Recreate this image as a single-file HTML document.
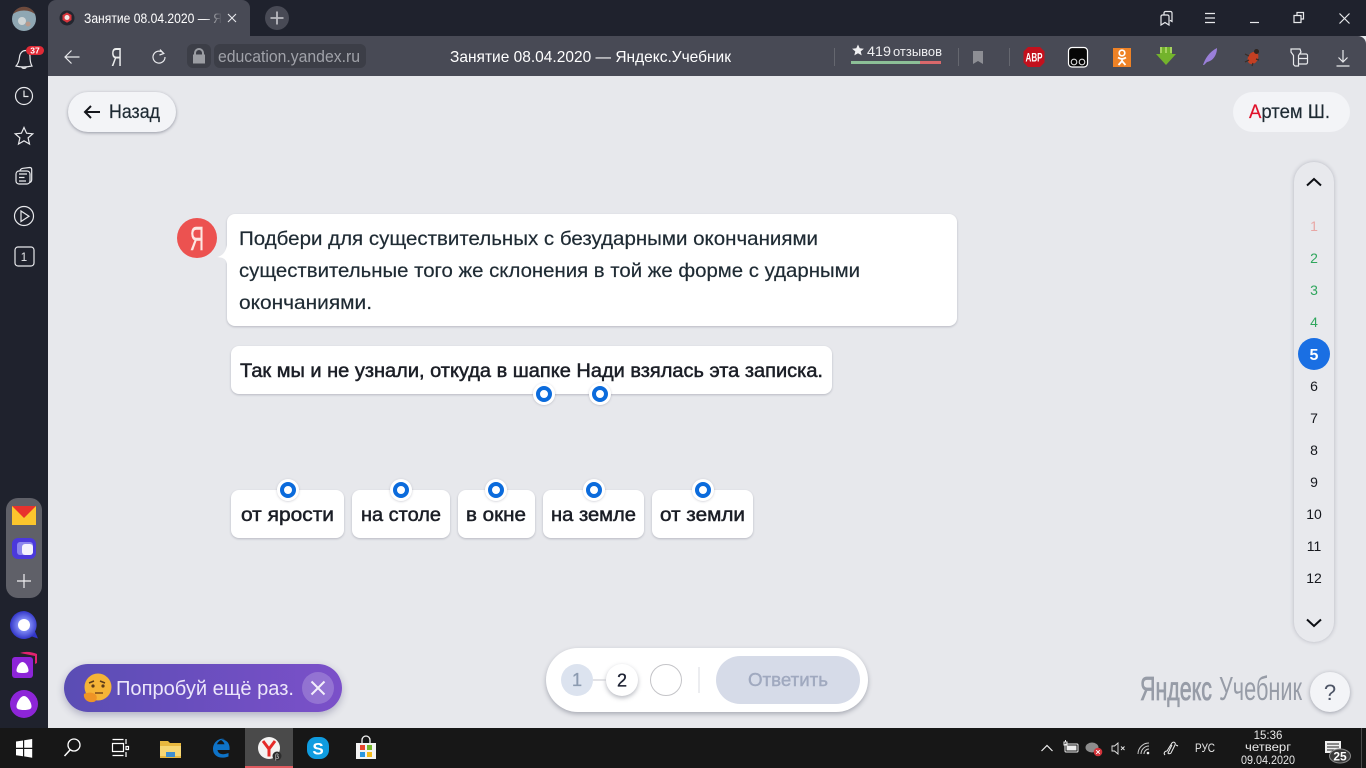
<!DOCTYPE html>
<html lang="ru"><head><meta charset="utf-8"><title>Занятие 08.04.2020 — Яндекс.Учебник</title>
<style>
html,body{margin:0;padding:0;width:1366px;height:768px;overflow:hidden;background:#e7e8ec}
div{position:absolute;box-sizing:border-box}
svg{position:absolute;left:0;top:0}
text{font-family:"Liberation Sans","Noto Sans CJK SC",sans-serif;white-space:pre}
.m{stroke-width:.5px;stroke:#1b1e26;fill:#1b1e26}
.q{stroke-width:.2px;stroke:#1e2a33;fill:#1e2a33}
.ic{fill:none;stroke:#e8e9ec;stroke-width:1.2}
.card{background:#fff;border-radius:8px;box-shadow:0 1px 2px rgba(60,65,85,.28)}
</style></head><body>
<div style="left:48px;top:76px;width:1318px;height:652px;background:#e7e8ec"></div>
<div style="left:0;top:0;width:48px;height:728px;background:#1f222d"></div>
<div style="left:48px;top:0;width:1318px;height:36px;background:#1f222d"></div>
<div style="left:48px;top:36px;width:1318px;height:40px;background:#484a55;border-radius:0 8px 0 0"></div>
<div style="left:48px;top:0;width:202px;height:37px;background:#484a55;border-radius:8px 8px 0 0"></div>
<div style="left:6px;top:498px;width:36px;height:100px;border-radius:12px;background:#5f6068"></div>
<div style="left:187px;top:44px;width:24px;height:24px;border-radius:6px;background:#3c3e47"></div>
<div style="left:214px;top:44px;width:152px;height:24px;border-radius:6px;background:#3c3e47"></div>
<div style="left:68px;top:92px;width:108px;height:40px;border-radius:20px;background:#f3f4f7;box-shadow:0 1px 3px rgba(50,55,75,.45)"></div>
<div style="left:1233px;top:92px;width:117px;height:40px;border-radius:20px;background:#f3f4f7"></div>
<div class="card" style="left:227px;top:214px;width:730px;height:112px"></div>
<div class="card" style="left:231px;top:346px;width:601px;height:48px"></div>
<div class="card" style="left:231px;top:490px;width:113px;height:48px"></div>
<div class="card" style="left:352px;top:490px;width:98px;height:48px"></div>
<div class="card" style="left:458px;top:490px;width:77px;height:48px"></div>
<div class="card" style="left:543px;top:490px;width:101px;height:48px"></div>
<div class="card" style="left:652px;top:490px;width:101px;height:48px"></div>
<div style="left:1294px;top:162px;width:40px;height:480px;border-radius:20px;background:#e8e9ed;box-shadow:0 0 4px rgba(50,55,75,.28)"></div>
<div style="left:546px;top:648px;width:322px;height:64px;border-radius:32px;background:#fff;box-shadow:0 2px 5px rgba(50,55,75,.35)"></div>
<div style="left:716px;top:656px;width:144px;height:48px;border-radius:24px;background:#d6dbe8"></div>
<div style="left:561px;top:664px;width:32px;height:32px;border-radius:50%;background:#dce3ef"></div>
<div style="left:606px;top:664px;width:32px;height:32px;border-radius:50%;background:#fff;box-shadow:0 2px 5px rgba(50,55,75,.35)"></div>
<div style="left:650px;top:664px;width:32px;height:32px;border-radius:50%;background:#fff;border:1px solid #c4c4c8"></div>
<div style="left:64px;top:664px;width:278px;height:48px;border-radius:24px;background:linear-gradient(90deg,#5a4db4,#7b50c9);box-shadow:0 3px 8px rgba(50,45,100,.3)"></div>
<div style="left:1310px;top:672px;width:40px;height:40px;border-radius:50%;background:#f3f4f7;box-shadow:0 1px 4px rgba(50,55,75,.4)"></div>
<div style="left:0;top:728px;width:1366px;height:40px;background:#171717"></div>
<div style="left:245px;top:728px;width:48px;height:40px;background:#4a4a4a;border-bottom:2px solid #e05a5f"></div>

<svg width="1366" height="768" viewBox="0 0 1366 768" xmlns="http://www.w3.org/2000/svg">
<defs>
<linearGradient id="fade" gradientUnits="userSpaceOnUse" x1="205" y1="0" x2="222" y2="0"><stop offset="0" stop-color="#fff"/><stop offset="1" stop-color="#fff" stop-opacity="0"/></linearGradient>
<radialGradient id="blueb"><stop offset=".3" stop-color="#8f9bff"/><stop offset="1" stop-color="#3236c8"/></radialGradient>
<filter id="s" x="-40%" y="-40%" width="180%" height="180%"><feDropShadow dx="0" dy="0.5" stdDeviation="1" flood-color="#505064" flood-opacity=".3"/></filter>
<g id="dot"><circle r="11" fill="#fff" filter="url(#s)"/><circle r="6" fill="none" stroke="#0b6bdc" stroke-width="4"/></g>
</defs>

<!-- tab -->
<circle cx="67" cy="18" r="7.500" fill="#23262f"/>
<path d="M67 12.500l4.500 2.500v5l-4.500 2.800-4.500-2.800v-5z" fill="#d8353c"/>
<circle cx="67" cy="17.500" r="2.500" fill="#f2e6e6"/>
<text x="84" y="23" font-size="13.500" fill="url(#fade)" textLength="138" lengthAdjust="spacingAndGlyphs">Занятие 08.04.2020 — Я</text>
<path d="M228 14l8 8M236 14l-8 8" fill="none" stroke="#e8e9ec" stroke-width="1.100"/>
<circle cx="277" cy="18" r="12" fill="#484a55"/>
<path d="M277 11.500v13M270.500 18h13" stroke="#b9bac0" stroke-width="1.800" fill="none"/>

<!-- window controls -->
<path class="ic" d="M1161 16.500a1.500 1.500 0 0 1 1.500-1.500h5a1.500 1.500 0 0 1 1.500 1.500V25l-4-2.500-4 2.500zM1164 15v-2a1.500 1.500 0 0 1 1.500-1.500h5a1.500 1.500 0 0 1 1.500 1.500v8.500l-2-1.200"/>
<path class="ic" d="M1205 13.500h10M1205 18h10M1205 22.500h10"/>
<path class="ic" d="M1250 22.500h9"/>
<path class="ic" d="M1294 15.500h7v7h-7zM1297 15.500v-3h6.500v6.500h-2.500"/>
<path class="ic" d="M1339.500 13.500l10 10M1349.500 13.500l-10 10"/>

<!-- toolbar -->
<path class="ic" d="M65 57h14.500M71.500 50.500L65 57l6.500 6.500"/>
<text x="111" y="66" font-size="26" fill="#eceded" textLength="11" lengthAdjust="spacingAndGlyphs">Я</text>
<path class="ic" d="M163.800 53.500a6 6 0 1 0 1.200 3.500M160 49.500l3.800 4-4.300 1.500"/>
<path d="M194 54.500v-1.500a5 5 0 0 1 10 0v1.500h1v9h-12v-9zm2 0h6v-1.500a3 3 0 0 0-6 0z" fill="#9b9da3"/>
<text x="218" y="62" font-size="16.500" fill="#a0a2a9" textLength="142" lengthAdjust="spacingAndGlyphs">education.yandex.ru</text>
<text x="450" y="62" font-size="16" fill="#fff" textLength="281" lengthAdjust="spacingAndGlyphs">Занятие 08.04.2020 — Яндекс.Учебник</text>
<path d="M834.500 48v18M958.500 48v18M1009.500 48v18" stroke="#65676f" stroke-width="1"/>
<path d="M858 44.500l1.700 3.800 4.200.4-3.200 2.700 1 4-3.700-2.100-3.700 2.100 1-4-3.200-2.700 4.200-.4z" fill="#f0f0f2"/>
<text x="867" y="56" font-size="14" fill="#eeeef0" textLength="24" lengthAdjust="spacingAndGlyphs">419</text>
<text x="893" y="56" font-size="12.500" fill="#eeeef0" textLength="49" lengthAdjust="spacingAndGlyphs">отзывов</text>
<rect x="851" y="61" width="69" height="3" fill="#8cbf97"/><rect x="920" y="61" width="21" height="3" fill="#d9686b"/>
<path d="M973 51h10v13l-5-3-5 3z" fill="#8d8e94"/>
<path d="M1028 47h12l4.500 4.500v11l-4.500 4.500h-12l-4.500-4.500v-11z" fill="#c3111d"/>
<text x="1034" y="61.500" font-size="11.500" font-weight="700" fill="#fff" text-anchor="middle" textLength="17" lengthAdjust="spacingAndGlyphs">ABP</text>
<rect x="1068.500" y="47.500" width="19" height="19.500" rx="3.500" fill="#060606" stroke="#fff" stroke-width="1.200"/>
<circle cx="1074" cy="62" r="2.800" fill="none" stroke="#ddd" stroke-width="1.100"/><circle cx="1082" cy="62" r="2.800" fill="none" stroke="#ddd" stroke-width="1.100"/>
<rect x="1113" y="48" width="18" height="19" fill="#ee8226"/>
<circle cx="1122" cy="53" r="2.800" fill="none" stroke="#fff" stroke-width="1.700"/>
<path d="M1118 57.500c2.500 1.700 5.500 1.700 8 0M1122 59v2.500M1122 61l-3.500 4M1122 61l3.500 4" stroke="#fff" stroke-width="1.800" fill="none"/>
<path d="M1160 47h12v7h4l-10 11-10-11h4z" fill="#73b32c"/><path d="M1161 47v6M1166 47v6M1171 47v6" stroke="#b8dd72" stroke-width="1.500"/>
<path d="M1203 65c2-6 6-13 14-17 0 7-4 13-10 14l-3 3z" fill="#9a7fd9"/>
<ellipse cx="1253" cy="58" rx="5" ry="6.500" transform="rotate(30 1253 58)" fill="#c43f22"/>
<circle cx="1256.500" cy="51.500" r="2.500" fill="#30251f"/><path d="M1245 54l4 2M1245 62l4-2M1252 66l1-3M1259 60l-3-1" stroke="#3a2c25" stroke-width="1.200"/>
<path class="ic" d="M1291 49h9l1 3-2.500 3.500v10.500h-3.500l-1.500-1.500V55.500L1291 52zM1300 54h6a1.500 1.500 0 0 1 1.500 1.500v7a1.500 1.500 0 0 1-1.500 1.500h-8M1299 58.500h8.500"/>
<path class="ic" d="M1343 50v12M1338.500 57.500L1343 62l4.500-4.500M1336.500 66h13"/>

<!-- sidebar -->
<circle cx="24" cy="19" r="12" fill="#8fa7b3"/><path d="M13 14a12 12 0 0 1 22 0c-3-2-6-3.500-11-3.500S16 12 13 14z" fill="#6e4a3c"/><circle cx="22" cy="21" r="4" fill="#cfd5d6"/><circle cx="28" cy="24" r="2.500" fill="#b99a8c"/>
<path class="ic" d="M16 66c2-2 3-4 3.500-9 .4-4 3-6.500 6-6.500s4.500 2 4.500 6c0 4 .5 7 2 9.500-5 1-11 1.500-16 0zM21.500 67a3 3 0 0 0 5 0"/>
<rect x="26" y="46" width="18" height="9" rx="4.500" fill="#e02a36"/><text x="35" y="53.500" font-size="8.500" font-weight="700" fill="#fff" text-anchor="middle">37</text>
<circle class="ic" cx="24" cy="96" r="8.500"/><path class="ic" d="M24 90.500V96.500h4.500"/>
<path class="ic" d="M24 127.500l2.600 5.700 6.200.6-4.700 4.100 1.400 6.100-5.500-3.200-5.500 3.200 1.400-6.100-4.700-4.100 6.200-.6z"/>
<rect class="ic" x="16" y="171" width="14" height="13" rx="3"/><path class="ic" d="M19 174h8M19 177.500h5.500M19 181h7M20 170.500c.5-1.500 1.500-2 3-2.200l6.500-.8c1.300 0 2.200.8 2.200 2v10c0 1.500-.5 2.500-1.700 3"/>
<circle class="ic" cx="24" cy="216" r="9.500"/><path class="ic" d="M21 211v10.500l8-5.200z"/>
<rect class="ic" x="15" y="247" width="19" height="19" rx="3"/>
<text x="24" y="261" font-size="11.500" fill="#e8e9ec" text-anchor="middle">1</text>
<rect x="12" y="506" width="24" height="19" fill="#fbc62d"/><path d="M12 506h24l-12 12z" fill="#e8322d"/>
<rect x="12" y="538" width="24" height="21" rx="6" fill="#4b39dc"/><rect x="17" y="542" width="16" height="13" rx="3" fill="#8c86ee"/><rect x="22" y="544" width="11" height="11" rx="3" fill="#f4f2fd"/>
<path d="M24 574v14M17 581h14" stroke="#f0f0f2" stroke-width="1.200"/>
<path d="M24 611a14 14 0 1 0 8 25.500l6 2-3-7a14 14 0 0 0-11-20.500z" fill="url(#blueb)"/><circle cx="24" cy="625" r="6" fill="#fff"/>
<path d="M20 653c6-2 12-1 17 1v9l-2 1v-8z" fill="#e3236f"/>
<rect x="12" y="657" width="21" height="21" rx="3" fill="#8d25d8"/>
<path d="M22.500 662c3 0 6 5 6 8.500 0 2-2 2.500-6 2.500s-6-.5-6-2.500c0-3.500 3-8.500 6-8.500z" fill="#fff"/>
<circle cx="24" cy="704" r="14" fill="#8d25d8"/>
<path d="M24 696c3.500 0 7.500 6.500 7.500 10.500 0 2.500-2.500 3.500-7.500 3.500s-7.500-1-7.500-3.500c0-4 4-10.500 7.500-10.500z" fill="#fff"/>

<!-- buttons -->
<path d="M85 112h15M91 106l-6 6 6 6" fill="none" stroke="#14161c" stroke-width="2"/>
<text x="109" y="118" font-size="19" class="q" textLength="51" lengthAdjust="spacingAndGlyphs">Назад</text>
<text x="1249" y="118" font-size="19" class="q" textLength="81" lengthAdjust="spacingAndGlyphs"><tspan fill="#e0102a" stroke="#e0102a">А</tspan>ртем Ш.</text>

<!-- question -->
<circle cx="197" cy="238" r="20" fill="#ec5250"/>
<text x="190" y="250" font-size="33" fill="#fde7e2" stroke="#fde7e2" stroke-width=".5" textLength="14" lengthAdjust="spacingAndGlyphs">Я</text>
<path d="M227 245c-1 6-4 11-10 12 5 .5 9 1 10 7z" fill="#fff"/>
<g font-size="19.500">
<text class="q" x="239" y="245" textLength="579" lengthAdjust="spacingAndGlyphs">Подбери для существительных с безударными окончаниями</text>
<text class="q" x="239" y="277" textLength="621" lengthAdjust="spacingAndGlyphs">существительные того же склонения в той же форме с ударными</text>
<text class="q" x="239" y="309" textLength="133" lengthAdjust="spacingAndGlyphs">окончаниями.</text>
</g>
<g font-size="19.500">
<text class="m" x="240" y="377" textLength="583" lengthAdjust="spacingAndGlyphs">Так мы и не узнали, откуда в шапке Нади взялась эта записка.</text>
<text class="m" x="241" y="521" textLength="93" lengthAdjust="spacingAndGlyphs">от ярости</text>
<text class="m" x="361" y="521" textLength="80" lengthAdjust="spacingAndGlyphs">на столе</text>
<text class="m" x="466" y="521" textLength="60" lengthAdjust="spacingAndGlyphs">в окне</text>
<text class="m" x="551" y="521" textLength="85" lengthAdjust="spacingAndGlyphs">на земле</text>
<text class="m" x="660" y="521" textLength="85" lengthAdjust="spacingAndGlyphs">от земли</text>
</g>
<use href="#dot" x="544" y="394"/><use href="#dot" x="600" y="394"/>
<use href="#dot" x="288" y="490"/><use href="#dot" x="401" y="490"/><use href="#dot" x="496" y="490"/><use href="#dot" x="594" y="490"/><use href="#dot" x="703" y="490"/>

<!-- right nav -->
<path d="M1307 185.500l7-6.500 7 6.500M1307 619.500l7 6.500 7-6.500" fill="none" stroke="#0d0f14" stroke-width="2"/>
<circle cx="1314" cy="354" r="16" fill="#1a6fe3"/>
<g font-size="14" text-anchor="middle" fill="#16181e">
<text x="1314" y="231" fill="#e8a7a5">1</text>
<text x="1314" y="263" fill="#2fa65d">2</text>
<text x="1314" y="295" fill="#2fa65d">3</text>
<text x="1314" y="327" fill="#2fa65d">4</text>
<text x="1314" y="360" font-size="16" font-weight="700" fill="#fff">5</text>
<text x="1314" y="391">6</text><text x="1314" y="423">7</text><text x="1314" y="455">8</text><text x="1314" y="487">9</text>
<text x="1314" y="519">10</text><text x="1314" y="551">11</text><text x="1314" y="583">12</text>
</g>

<!-- answer panel -->
<path d="M593 680h13" stroke="#c4c6cc"/><path d="M699 667v26" stroke="#e6e7eb" stroke-width="1.500"/>
<text x="577" y="686" font-size="18" fill="#8c9bb0" stroke="#8c9bb0" stroke-width=".3" text-anchor="middle">1</text>
<text x="622" y="686.500" font-size="18" fill="#1d2233" stroke="#1d2233" stroke-width=".3" text-anchor="middle">2</text>
<text x="748" y="686" font-size="18" fill="#a0a9bf" stroke="#a0a9bf" stroke-width=".4" textLength="80" lengthAdjust="spacingAndGlyphs">Ответить</text>

<!-- toast -->
<circle cx="98" cy="687" r="13.500" fill="#f5b437"/>
<path d="M89 683l5-2M100 681l5 2" stroke="#5b3b1a" stroke-width="1.500" fill="none"/>
<circle cx="93" cy="686" r="1.600" fill="#5b3b1a"/><circle cx="103" cy="686" r="1.600" fill="#5b3b1a"/>
<path d="M95 693h8" stroke="#7c4b1c" stroke-width="1.500"/>
<path d="M84 694c3-2 10-2 12 1 2 3 0 7-3 7-5 1-10-3-9-8z" fill="#ee9426"/>
<text x="116" y="695" font-size="20.500" fill="#ece6fa" textLength="178" lengthAdjust="spacingAndGlyphs">Попробуй ещё раз.</text>
<circle cx="318" cy="688" r="16" fill="#fff" fill-opacity=".2"/>
<path d="M311.500 681.500l13 13M324.500 681.500l-13 13" stroke="#f3effb" stroke-width="2"/>

<!-- logo -->
<text x="1140" y="700" font-size="33" fill="#979ca7" stroke="#979ca7" stroke-width=".8" textLength="72" lengthAdjust="spacingAndGlyphs">Яндекс</text>
<text x="1219" y="700" font-size="33" fill="#979ca7" textLength="83" lengthAdjust="spacingAndGlyphs">Учебник</text>
<text x="1330" y="700" font-size="22" fill="#4e5566" text-anchor="middle">?</text>

<!-- taskbar -->
<path d="M16 741.500l7-1v7.200h-7zM24.200 740.300l8-1.300v8.700h-8zM16 749h7v7.200l-7-1zM24.200 749h8v8.700l-8-1.300z" fill="#fff"/>
<circle cx="74" cy="745" r="6" fill="none" stroke="#fff" stroke-width="1.300"/><path d="M70 750l-5.500 6" stroke="#fff" stroke-width="1.500"/>
<path d="M112.500 739.500h11M112.500 755.500h11M112.500 743.500h11v8h-11zM126 739v5M126 746.500h2.500v3H126zM126 752v5" fill="none" stroke="#fff" stroke-width="1.200"/>
<path d="M160 741h8l2 2h11v15h-21z" fill="#e8b83f"/><rect x="160" y="746" width="21" height="10" fill="#f7d774"/><rect x="166" y="752" width="9" height="5" fill="#3f8fd0"/>
<path d="M229.500 750h-12c.5 4 5 5.500 11 3v3.500c-8 3-15.500 0-15.500-7.500 0-8 8-12 12-9.500-4-.5-7 2-8 4.800h7.500c-.5-2-2-3.500-3.500-4.300 5-1 9.500 3 8.500 10.500z" fill="#0e73c8"/>
<circle cx="269" cy="748" r="11" fill="#f4f3f2"/>
<path d="M263 741l6 8 6-8M269 749v7.500" stroke="#e62b28" stroke-width="3" fill="none"/>
<circle cx="277" cy="756" r="4.500" fill="#2d2d2d"/>
<text x="277" y="759" font-size="7" fill="#ddd" text-anchor="middle">β</text>
<rect x="307" y="737" width="22" height="22" rx="9" fill="#0f9ce0"/>
<text x="318" y="754.500" font-size="17" font-weight="700" fill="#fff" text-anchor="middle">S</text>
<rect x="356" y="743" width="20" height="16" fill="#f3f3f3"/><path d="M362 743v-3a4 4 0 0 1 8 0v3" fill="none" stroke="#f3f3f3" stroke-width="1.300"/>
<rect x="360" y="745" width="5" height="5" fill="#e8452c"/><rect x="367" y="745" width="5" height="5" fill="#74b72b"/><rect x="360" y="752" width="5" height="5" fill="#2b97e0"/><rect x="367" y="752" width="5" height="5" fill="#f5bc1c"/>

<path d="M1041.500 751l5.500-5.500 5.500 5.500" fill="none" stroke="#eee" stroke-width="1.200"/>
<rect x="1065" y="744" width="13" height="8" rx="1" fill="none" stroke="#eee"/><rect x="1066.500" y="745.500" width="10" height="5" fill="#eee"/><path d="M1064 742h3v3h-3zM1065.500 740v2M1078 746.500v3" stroke="#eee" fill="none"/>
<ellipse cx="1092" cy="747.500" rx="6.500" ry="5" fill="#8d8d8d"/><circle cx="1098" cy="752" r="4.300" fill="#d4343b"/>
<path d="M1096.200 750.200l3.600 3.600M1099.800 750.200l-3.600 3.600" stroke="#fff"/>
<path d="M1112 746h2.500l3.500-3v11l-3.500-3H1112zM1121 746.500l3.500 3.500M1124.500 746.500l-3.500 3.500" fill="none" stroke="#e8e8e8" stroke-width=".9"/>
<path d="M1138 754a11 11 0 0 1 11-11M1141 754a8 8 0 0 1 8-8M1144 754a5 5 0 0 1 5-5" fill="none" stroke="#ccc"/><circle cx="1148" cy="753" r="1.300" fill="#eee"/>
<path d="M1165 755c-2-2 0-4 2-4l5-8c2-2 4 0 3 2l-4 8c-1 1-3 1-3 0l4-8M1176 745l2 1" fill="none" stroke="#eee"/>
<g fill="#e8e8e8" text-anchor="middle">
<text x="1205" y="752" font-size="12" textLength="20" lengthAdjust="spacingAndGlyphs">РУС</text>
<text x="1268" y="739" font-size="11.500">15:36</text>
<text x="1268" y="751" font-size="11.500" textLength="46" lengthAdjust="spacingAndGlyphs">четверг</text>
<text x="1268" y="764" font-size="11.500" textLength="54" lengthAdjust="spacingAndGlyphs">09.04.2020</text>
</g>
<rect x="1325" y="741" width="16" height="12" fill="#f0f0f0"/><path d="M1327 744h12M1327 747h12M1327 750h8" stroke="#222"/>
<ellipse cx="1340" cy="756" rx="10.500" ry="7" fill="#3a3a3a" stroke="#8a8a8a"/>
<text x="1340" y="760.500" font-size="12" font-weight="700" fill="#fff" text-anchor="middle">25</text>
<path d="M1361.500 728v40" stroke="#4a4a4a"/>
</svg>
</body></html>
